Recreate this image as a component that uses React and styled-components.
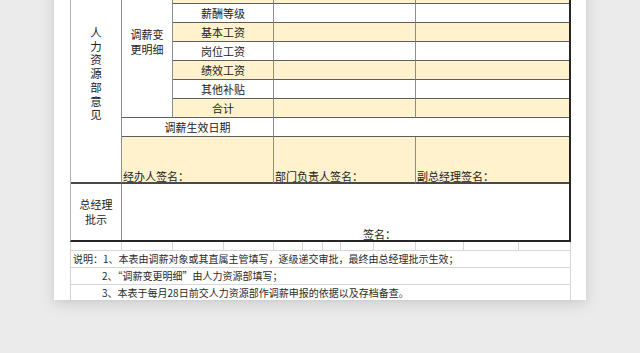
import React from 'react';
import styled, { createGlobalStyle } from 'styled-components';

const GlobalStyle = createGlobalStyle`
  html, body {
    margin: 0;
    padding: 0;
    background: #ebebeb;
    overflow: hidden;
  }
  body {
    font-family: "Noto Sans CJK SC", "Liberation Sans", sans-serif;
    color: #222;
  }
`;

const Stage = styled.div`
  width: 640px;
  height: 353px;
  overflow: hidden;
`;

const Paper = styled.div`
  box-sizing: border-box;
  margin: -50px 0 0 54px;
  width: 532px;
  height: 350px;
  padding: 15px 0 0 16px;
  background: #fff;
  overflow: hidden;
  box-shadow: 0 4px 14px rgba(0, 0, 0, 0.13), 0 0 3px rgba(0, 0, 0, 0.06);
`;

const Sheet = styled.div`
  box-sizing: border-box;
  display: grid;
  grid-template-columns: 51px 51px 101px 142px 153px;
  grid-template-rows: repeat(9, 19px) 47px 56px;
  width: 501px;
  border-top: 1px solid #5e5e5e;
  border-left: 1px solid #b4b4b4;
  border-right: 2px solid #262626;
  border-bottom: 2px solid #262626;
`;

const Cell = styled.div`
  box-sizing: border-box;
  grid-column: ${(p) => p.$col};
  grid-row: ${(p) => p.$row};
  display: flex;
  align-items: ${(p) => p.$valign || 'center'};
  justify-content: ${(p) => p.$align || 'center'};
  padding: ${(p) => p.$pad || '0'};
  background: ${(p) => (p.$yellow ? '#fff2cc' : '#ffffff')};
  border-right: ${(p) => (p.$last ? 'none' : '1px solid #8c8c8c')};
  border-bottom: ${(p) => p.$bottom || '1px solid #5e5e5e'};
  font-size: 11px;
  line-height: ${(p) => p.$lh || '14px'};
  text-align: center;
  white-space: nowrap;
  color: #222;
`;

const VerticalText = styled.span`
  display: block;
  width: 12px;
  font-size: 11.5px;
  line-height: 13.7px;
  white-space: normal;
  word-break: break-all;
  text-align: center;
`;

const Lower = styled.div`
  box-sizing: border-box;
  display: grid;
  grid-template-columns: 51px 51px 51px 50px 29px 20px 18px 33px 42px 48px 55px 52px;
  grid-template-rows: 9px 17px 17px 17px;
  width: 501px;
  border-left: 1px solid #d3d3d3;
`;

const GridCell = styled.div`
  box-sizing: border-box;
  border-right: 1px solid #d6d6d6;
  border-bottom: 1px solid #d6d6d6;
`;

const NoteRow = styled.div`
  box-sizing: border-box;
  grid-column: 1 / -1;
  display: flex;
  align-items: center;
  padding-left: ${(p) => p.$indent}px;
  border-right: 1px solid #d6d6d6;
  border-bottom: 1px solid #d6d6d6;
  font-size: 10px;
  line-height: 16px;
  color: #2a2a2a;
  white-space: nowrap;
`;

const items = [
  { name: '', yellow: false },
  { name: '', yellow: true },
  { name: '薪酬等级', yellow: false },
  { name: '基本工资', yellow: true },
  { name: '岗位工资', yellow: false },
  { name: '绩效工资', yellow: true },
  { name: '其他补贴', yellow: false },
  { name: '合计', yellow: true },
];

const lowerCols = 12;

const notes = [
  { indent: 2, text: '说明：1、本表由调薪对象或其直属主管填写，逐级递交审批，最终由总经理批示生效；' },
  { indent: 31, text: '2、“调薪变更明细”由人力资源部填写；' },
  { indent: 31, text: '3、本表于每月28日前交人力资源部作调薪申报的依据以及存档备查。' },
];

const THICK = '2px solid #4a4a4a';

export default function App() {
  return (
    <>
      <GlobalStyle />
      <Stage>
        <Paper>
          <Sheet>
            <Cell $col="1" $row="1 / 11" $bottom={THICK}>
              <VerticalText>人力资源部意见</VerticalText>
            </Cell>
            <Cell $col="2" $row="1 / 9" $lh="15px">
              调薪变
              <br />
              更明细
            </Cell>
            {items.map((it, i) => (
              <React.Fragment key={i}>
                <Cell $col="3" $row={`${i + 1}`} $yellow={it.yellow}>
                  {it.name}
                </Cell>
                <Cell $col="4" $row={`${i + 1}`} $yellow={it.yellow} />
                <Cell $col="5" $row={`${i + 1}`} $yellow={it.yellow} $last />
              </React.Fragment>
            ))}
            <Cell $col="2 / 4" $row="9">调薪生效日期</Cell>
            <Cell $col="4 / 6" $row="9" $last />
            <Cell
              $col="2 / 4"
              $row="10"
              $yellow
              $bottom={THICK}
              $valign="flex-end"
              $align="flex-start"
              $pad="0 0 0 1px"
              $lh="12px"
            >
              经办人签名：
            </Cell>
            <Cell
              $col="4"
              $row="10"
              $yellow
              $bottom={THICK}
              $valign="flex-end"
              $align="flex-start"
              $pad="0 0 0 1px"
              $lh="12px"
            >
              部门负责人签名：
            </Cell>
            <Cell
              $col="5"
              $row="10"
              $yellow
              $bottom={THICK}
              $valign="flex-end"
              $align="flex-start"
              $pad="0 0 0 1px"
              $lh="12px"
              $last
            >
              副总经理签名：
            </Cell>
            <Cell $col="1" $row="11" $bottom="none" $lh="15px">
              总经理
              <br />
              批示
            </Cell>
            <Cell
              $col="2 / 6"
              $row="11"
              $bottom="none"
              $last
              $valign="flex-end"
              $align="flex-start"
              $pad="0 0 0 241px"
              $lh="12px"
            >
              签名：
            </Cell>
          </Sheet>
          <Lower>
            {Array.from({ length: lowerCols }).map((_, i) => (
              <GridCell key={i} />
            ))}
            {notes.map((n) => (
              <NoteRow key={n.text} $indent={n.indent}>
                {n.text}
              </NoteRow>
            ))}
          </Lower>
        </Paper>
      </Stage>
    </>
  );
}
